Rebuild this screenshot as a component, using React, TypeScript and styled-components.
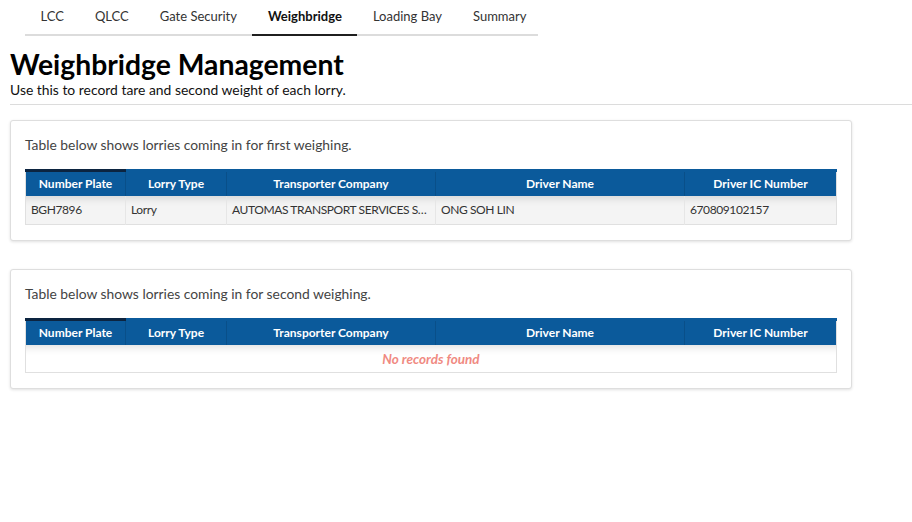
import { createGlobalStyle, styled } from "styled-components";

const GlobalStyle = createGlobalStyle`
  body {
    margin: 0;
    background: #fff;
    font-family: Lato, "Liberation Sans", sans-serif;
    color: #333;
  }
`;

interface ILorry {
  plate: string;
  type: string;
  company: string;
  driver: string;
  ic: string;
}

const columns = [
  { label: "Number Plate", width: 100 },
  { label: "Lorry Type", width: 101 },
  { label: "Transporter Company", width: 209 },
  { label: "Driver Name", width: 249 },
  { label: "Driver IC Number", width: 152 },
];

const tabs = ["LCC", "QLCC", "Gate Security", "Weighbridge", "Loading Bay", "Summary"];

const firstWeighing: ILorry[] = [
  {
    plate: "BGH7896",
    type: "Lorry",
    company: "AUTOMAS TRANSPORT SERVICES SDN BHD",
    driver: "ONG SOH LIN",
    ic: "670809102157",
  },
];

const Page = styled.div`
  padding: 0 0 40px 10px;
`;

const TabBar = styled.nav`
  display: flex;
  margin-left: 15px;
  width: 513px;
  border-bottom: 2px solid #dcdcdc;
`;

const Tab = styled.div<{ $active?: boolean }>`
  box-sizing: border-box;
  height: 36px;
  padding: 8px 15.5px 0;
  margin-bottom: -2px;
  font-size: 13px;
  white-space: nowrap;
  color: ${({ $active }) => ($active ? "#111" : "#333")};
  font-weight: ${({ $active }) => ($active ? 700 : 400)};
  box-shadow: ${({ $active }) => ($active ? "inset 0 -2px 0 #1f1f1f" : "none")};
`;

const Title = styled.h1`
  margin: 11px 0 0;
  font-size: 28.3px;
  line-height: 34px;
  font-weight: 700;
  color: #000;
`;

const Subtitle = styled.p`
  margin: 0;
  font-size: 13.9px;
  line-height: 17px;
  color: #111;
`;

const Divider = styled.hr`
  margin: 6px 0 15px;
  border: none;
  border-top: 1px solid #dcdcdc;
`;

const Card = styled.section`
  width: 842px;
  box-sizing: border-box;
  padding: 14px 14px 15px;
  border: 1px solid #dedede;
  border-radius: 3px;
  box-shadow: 0 1px 3px rgba(0, 0, 0, 0.12);
  background: #fff;
  & + & {
    margin-top: 28px;
  }
`;

const Caption = styled.p`
  margin: 0 0 14px;
  font-size: 13.85px;
  line-height: 20px;
  color: #444;
`;

const Table = styled.table`
  width: 811px;
  border-collapse: collapse;
  table-layout: fixed;
  border: 1px solid #e0e0e0;
  font-size: 12px;
`;

const HeadCell = styled.th<{ $sorted?: boolean }>`
  height: 24px;
  padding: 0 4px;
  line-height: 14px;
  background: #0b5a9b;
  color: #fff;
  font-weight: 700;
  text-align: center;
  border-left: 1px solid #094f89;
  border-top: 3px solid ${({ $sorted }) => ($sorted ? "#0c2440" : "#0b5a9b")};
  &:first-child {
    border-left: none;
  }
`;

const Row = styled.tr`
  background: #f4f4f4;
  box-shadow: inset 0 10px 8px -8px rgba(0, 0, 0, 0.14);
`;

const Cell = styled.td`
  height: 28px;
  padding: 0 5px;
  line-height: 14px;
  letter-spacing: -0.4px;
  color: #333;
  white-space: nowrap;
  overflow: hidden;
  text-overflow: ellipsis;
  border-left: 1px solid #e6e6e6;
  &:first-child {
    border-left: none;
  }
`;

const EmptyRow = styled.tr`
  background: #fff;
  box-shadow: inset 0 10px 8px -8px rgba(0, 0, 0, 0.14);
`;

const EmptyCell = styled.td`
  height: 27px;
  padding: 0;
  line-height: 16px;
  text-align: center;
  font-size: 13.5px;
  font-weight: 700;
  font-style: italic;
  color: #f08a82;
`;

function LorryTable({ rows }: { rows: ILorry[] }) {
  return (
    <Table>
      <colgroup>
        {columns.map((c) => (
          <col key={c.label} style={{ width: c.width }} />
        ))}
      </colgroup>
      <thead>
        <tr>
          {columns.map((c, i) => (
            <HeadCell key={c.label} $sorted={i === 0}>
              {c.label}
            </HeadCell>
          ))}
        </tr>
      </thead>
      <tbody>
        {rows.length === 0 ? (
          <EmptyRow>
            <EmptyCell colSpan={columns.length}>No records found</EmptyCell>
          </EmptyRow>
        ) : (
          rows.map((r) => (
            <Row key={r.plate}>
              <Cell>{r.plate}</Cell>
              <Cell>{r.type}</Cell>
              <Cell>{r.company}</Cell>
              <Cell>{r.driver}</Cell>
              <Cell>{r.ic}</Cell>
            </Row>
          ))
        )}
      </tbody>
    </Table>
  );
}

export default function App() {
  return (
    <>
      <GlobalStyle />
      <Page>
        <TabBar>
          {tabs.map((t) => (
            <Tab key={t} $active={t === "Weighbridge"}>
              {t}
            </Tab>
          ))}
        </TabBar>
        <Title>Weighbridge Management</Title>
        <Subtitle>Use this to record tare and second weight of each lorry.</Subtitle>
        <Divider />
        <Card>
          <Caption>Table below shows lorries coming in for first weighing.</Caption>
          <LorryTable rows={firstWeighing} />
        </Card>
        <Card>
          <Caption>Table below shows lorries coming in for second weighing.</Caption>
          <LorryTable rows={[]} />
        </Card>
      </Page>
    </>
  );
}
